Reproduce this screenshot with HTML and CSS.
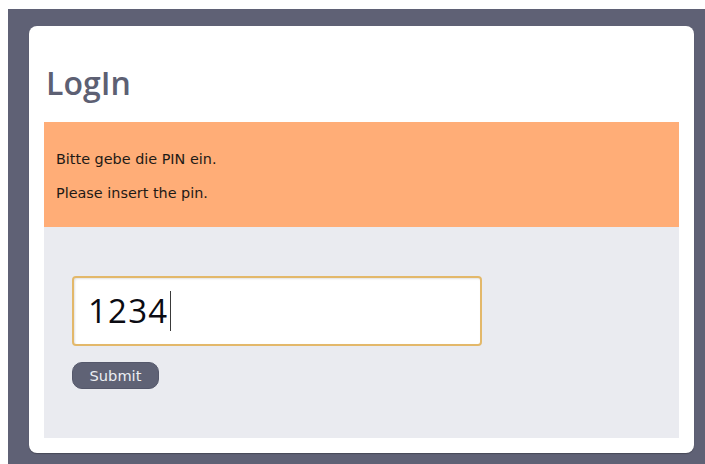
FILE: index.html
```html
<!DOCTYPE html>
<html lang="de">
<head>
<meta charset="utf-8">
<title>LogIn</title>
<link rel="stylesheet" href="styles.css">
</head>
<body>
<div class="backdrop">
  <main class="card">
    <h1 class="title">LogIn</h1>
    <section class="notice">
      <p>Bitte gebe die PIN ein.</p>
      <p>Please insert the pin.</p>
    </section>
    <form class="panel">
      <div class="pin-field" role="textbox" aria-label="PIN"><span class="pin-value">1234</span><span class="caret"></span></div>
      <button type="button" class="submit">Submit</button>
    </form>
  </main>
</div>
</body>
</html>
```

FILE: styles.css
```css
html, body {
  height: 100%;
}

body {
  margin: 9px 0 0 8px;
  background: #ffffff;
  font-family: "DejaVu Sans", "Liberation Sans", sans-serif;
  overflow: hidden;
}

.backdrop {
  box-sizing: border-box;
  height: 455px;
  padding: 17px 11px 11px 21px;
  background: #5f6175;
}

.card {
  box-sizing: border-box;
  height: 427px;
  padding: 15px;
  background: #ffffff;
  border-radius: 8px;
  box-shadow: 0 1px 1px rgba(0, 0, 0, 0.25);
}

.title {
  margin: 23px 0 21px;
  padding-left: 2px;
  font-family: "Open Sans", sans-serif;
  font-weight: 600;
  font-size: 32px;
  line-height: 37px;
  color: #5d6073;
}

.notice {
  padding: 13px 12px 10px;
  background: #ffad77;
  color: #1e1a16;
  font-size: 14.4px;
  line-height: 20px;
}

.notice p {
  margin: 14px 0;
}

.panel {
  box-sizing: border-box;
  height: 211px;
  margin: 0;
  padding: 49px 28px;
  background: #eaebf0;
  display: flex;
  flex-direction: column;
  align-items: flex-start;
  gap: 16px;
}

.pin-field {
  box-sizing: border-box;
  width: 410px;
  height: 70px;
  padding: 0 14px;
  display: flex;
  align-items: center;
  background: #ffffff;
  border: 2px solid #e3b86a;
  border-radius: 4px;
  box-shadow: inset 1px 1px 2px rgba(0, 0, 0, 0.12);
  font-family: "Open Sans", sans-serif;
  font-size: 33px;
  letter-spacing: 1.2px;
  color: #0b0b12;
}

.pin-value {
  line-height: 40px;
}

.caret {
  width: 1px;
  height: 40px;
  margin-left: 2px;
  background: #3a3a3a;
}

.submit {
  width: 87px;
  height: 27px;
  padding: 0;
  border: 1px solid #55586b;
  border-radius: 10px;
  background: #5f6275;
  color: #eceef3;
  font-family: "DejaVu Sans", sans-serif;
  font-size: 14.6px;
  line-height: 25px;
  cursor: pointer;
}
```
